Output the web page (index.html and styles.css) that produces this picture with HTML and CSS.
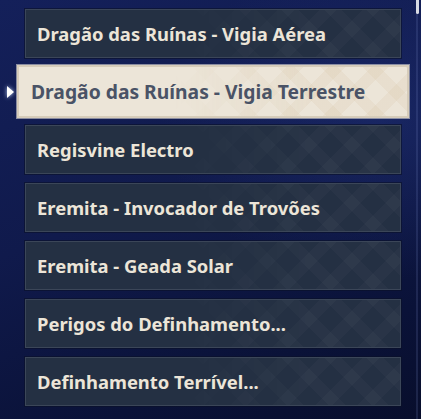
FILE: index.html
```html
<!DOCTYPE html>
<html lang="pt">
<head>
<meta charset="utf-8">
<link rel="stylesheet" href="styles.css">
</head>
<body>
<div class="panel">
  <ul class="list">
    <li class="item"><span>Dragão das Ruínas - Vigia Aérea</span></li>
    <li class="item selected"><span>Dragão das Ruínas - Vigia Terrestre</span></li>
    <li class="item"><span>Regisvine Electro</span></li>
    <li class="item"><span>Eremita - Invocador de Trovões</span></li>
    <li class="item"><span>Eremita - Geada Solar</span></li>
    <li class="item"><span>Perigos do Definhamento...</span></li>
    <li class="item"><span>Definhamento Terrível...</span></li>
  </ul>
  <div class="scroll"><div class="thumb"></div></div>
</div>
</body>
</html>
```
FILE: styles.css
```css
* { box-sizing: border-box; }
html, body {
  margin: 0;
  padding: 0;
  width: 421px;
  height: 419px;
  overflow: hidden;
}
body {
  background:
    radial-gradient(ellipse 220px 160px at 380px 120px, rgba(40, 60, 140, 0.35), transparent),
    linear-gradient(160deg, #14205a 0%, #101a4c 45%, #0a1238 80%, #080e2c 100%);
  font-family: "Noto Sans", "Open Sans", sans-serif;
}
.panel {
  position: relative;
  height: 419px;
  display: flex;
}
.list {
  list-style: none;
  margin: 0;
  padding: 9px 0 0 25px;
  width: 401px;
  display: flex;
  flex-direction: column;
  gap: 9px;
}
.item {
  position: relative;
  height: 49px;
  display: flex;
  align-items: center;
  padding-left: 11px;
  background: #243043;
  border: 1.5px solid #3b4658;
  box-shadow: 0 0 0 1px rgba(10, 16, 40, 0.6);
  color: #ece5d8;
  font-size: 18.4px;
  font-weight: 700;
  white-space: nowrap;
  overflow: hidden;
}
.item span { position: relative; z-index: 1; }
.item::after {
  content: "";
  position: absolute;
  top: 0; right: 0; bottom: 0;
  width: 60%;
  background:
    repeating-linear-gradient(45deg, transparent 0 18px, rgba(255,255,255,0.025) 18px 30px),
    repeating-linear-gradient(-45deg, transparent 0 18px, rgba(255,255,255,0.025) 18px 30px);
  -webkit-mask-image: linear-gradient(90deg, transparent, #000 60%);
  mask-image: linear-gradient(90deg, transparent, #000 60%);
}
.item.selected {
  margin: -2px -8px -2px -8px;
  height: 53px;
  padding-left: 12px;
  background: #ece5d8;
  border: 2px solid #d6ccba;
  box-shadow: 0 0 0 1px rgba(255, 250, 235, 0.5);
  color: #4a5366;
  font-size: 19.3px;
  overflow: visible;
}
.item.selected::after {
  background:
    repeating-linear-gradient(45deg, transparent 0 18px, rgba(200,175,130,0.11) 18px 30px),
    repeating-linear-gradient(-45deg, transparent 0 18px, rgba(200,175,130,0.11) 18px 30px);
}
.item.selected::before {
  content: "";
  position: absolute;
  left: -12px;
  top: 50%;
  margin-top: -6px;
  border-left: 7px solid #ffffff;
  border-top: 6px solid transparent;
  border-bottom: 6px solid transparent;
  filter: drop-shadow(0 0 2px rgba(200, 220, 255, 0.9));
}
.scroll {
  position: absolute;
  right: 3px;
  top: 0;
  bottom: 0;
  width: 2px;
  background: rgba(120, 140, 200, 0.18);
}
.thumb {
  width: 3px;
  margin-left: -0.5px;
  height: 14px;
  border-radius: 0 0 2px 2px;
  background: #d8dbe4;
}
```
